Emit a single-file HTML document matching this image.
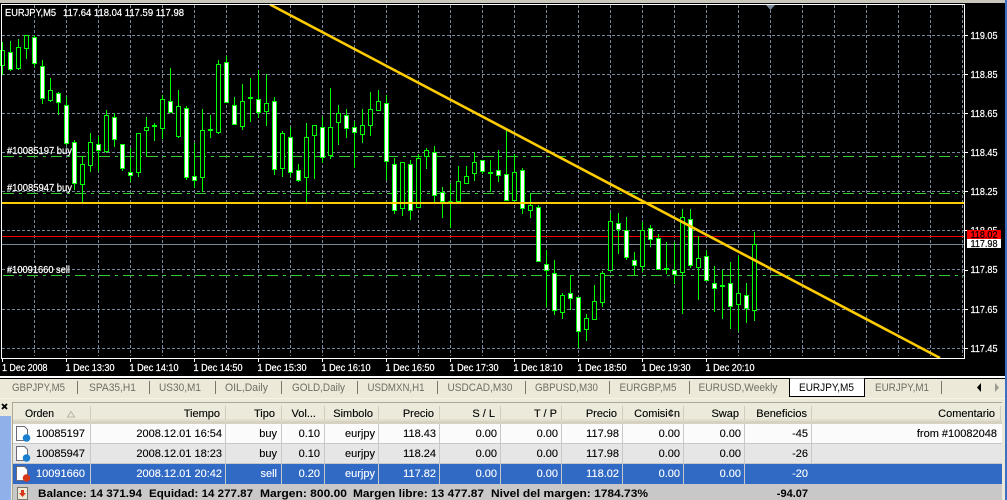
<!DOCTYPE html>
<html><head><meta charset="utf-8"><style>
html,body{margin:0;padding:0;background:#ece9d8;width:1007px;height:500px;overflow:hidden}
svg{display:block}
text{font-family:"Liberation Sans",sans-serif;font-size:11px;fill:#000;white-space:pre}
.c text{font-size:10.5px;fill:#fff;stroke:#fff;stroke-width:.22px}
.t text{fill:#6f6f64}
.h text,.r text{text-anchor:end;stroke:currentColor;stroke-width:.12px}
.h text,.r text{color:#000}
.w text{fill:#fff;color:#fff}
.b text{font-weight:bold}
</style></head><body>
<svg width="1007" height="500" viewBox="0 0 1007 500" xmlns="http://www.w3.org/2000/svg">
<rect width="1007" height="500" fill="#ece9d8"/>
<rect width="1007" height="3" fill="#c9c6bc"/>
<rect y="3" width="1005" height="373" fill="#000"/>
<rect y="376" width="1005" height="2" fill="#fff"/>
<rect y="378" width="1005" height="1" fill="#000"/>
<rect x="1005" y="0" width="2" height="500" fill="#3a6fc4"/>

<!-- grid -->
<path shape-rendering="crispEdges" fill="none" stroke="#778899" stroke-dasharray="3 2" d="M2 35.5H964M2 74.5H964M2 113.5H964M2 152.5H964M2 191.5H964M2 230.5H964M2 269.5H964M2 309.5H964M2 348.5H964
M34.5 5V356M66.5 5V356M98.5 5V356M130.5 5V356M162.5 5V356M194.5 5V356M226.5 5V356M258.5 5V356M290.5 5V356M322.5 5V356M354.5 5V356M386.5 5V356M418.5 5V356M450.5 5V356M482.5 5V356M514.5 5V356M546.5 5V356M578.5 5V356M610.5 5V356M642.5 5V356M674.5 5V356M706.5 5V356M738.5 5V356M770.5 5V356M802.5 5V356M834.5 5V356M866.5 5V356M898.5 5V356M930.5 5V356M962.5 5V356"/>
<path d="M766 5h9l-4.500 5z" fill="#778899"/>
<!-- order lines -->
<path shape-rendering="crispEdges" fill="none" stroke="#32cd32" stroke-dasharray="11 5 3 5" d="M3 156.500H964M3 193.500H964M3 275.500H964"/>
<path shape-rendering="crispEdges" fill="none" stroke="#778899" d="M2 244.500H964"/>
<path shape-rendering="crispEdges" fill="none" stroke="#f00" d="M2 236.500H964"/>

<!-- candles -->
<path shape-rendering="crispEdges" fill="none" stroke="#0f0" d="M2.500 42V75M10.500 41V71M18.500 39V70M26.500 35V59M34.500 35V67M42.500 60V104M50.500 78V102M58.500 92V115M66.500 97V145M74.500 140V190M82.500 156V203M90.500 133V172M98.500 136V171M106.500 110V153M114.500 113V147M122.500 144V171M130.500 148V182M138.500 133V177M146.500 117V157M154.500 123V141M162.500 95V139M170.500 68V113M178.500 90V138M186.500 106V180M194.500 143V188M202.500 109V192M210.500 115V138M218.500 60V134M226.500 56V103M234.500 97V125M242.500 84V130M250.500 78V122M258.500 70V118M266.500 74V126M274.500 97V175M282.500 131V177M290.500 127V177M298.500 164V182M306.500 123V203M314.500 125V179M322.500 117V163M330.500 88V159M338.500 105V145M346.500 109V138M354.500 121V168M362.500 109V143M370.500 92V136M378.500 90V111M386.500 95V180M394.500 158V214M402.500 162V216M410.500 160V220M418.500 154V208M426.500 148V169M434.500 146V203M442.500 187V218M450.500 183V228M458.500 166V202M466.500 166V184M474.500 152V181M482.500 160V174M490.500 160V192M498.500 150V182M506.500 130V201M514.500 154V201M522.500 168V214M530.500 193V218M538.500 205V262M546.500 250V307M554.500 260V315M562.500 293V319M570.500 275V310M578.500 297V348M586.500 314V341M594.500 285V320M602.500 271V307M610.500 213V271M618.500 213V254M626.500 217V260M634.500 252V275M642.500 222V272M650.500 225V247M658.500 234V270M666.500 242V274M674.500 242V284M682.500 209V314M690.500 209V268M698.500 236V300M706.500 250V281M714.500 266V312M722.500 270V319M730.500 262V329M738.500 256V331M746.500 283V323M754.500 232V321"/>
<path shape-rendering="crispEdges" fill="#fff" stroke="#0f0" d="M8.500 52.500h4v17h-4zM32.500 37.500h4v26h-4zM40.500 66.500h4v32h-4zM56.500 93.500h4v9h-4zM64.500 105.500h4v38h-4zM72.500 142.500h4v41h-4zM96.500 144.500h4v6h-4zM112.500 117.500h4v22h-4zM120.500 144.500h4v24h-4zM128.500 172.500h4v3h-4zM152.500 125.500h4v1h-4zM168.500 101.500h4v11h-4zM184.500 108.500h4v69h-4zM192.500 176.500h4v4h-4zM208.500 129.500h4v1h-4zM224.500 62.500h4v40h-4zM232.500 105.500h4v19h-4zM248.500 97.500h4v1h-4zM256.500 99.500h4v13h-4zM272.500 101.500h4v68h-4zM288.500 137.500h4v35h-4zM296.500 170.500h4v10h-4zM320.500 127.500h4v30h-4zM344.500 115.500h4v13h-4zM352.500 127.500h4v5h-4zM384.500 103.500h4v58h-4zM392.500 164.500h4v46h-4zM408.500 164.500h4v46h-4zM432.500 152.500h4v43h-4zM440.500 192.500h4v9h-4zM480.500 160.500h4v11h-4zM496.500 170.500h4v5h-4zM504.500 174.500h4v26h-4zM520.500 170.500h4v38h-4zM536.500 207.500h4v54h-4zM544.500 264.500h4v6h-4zM552.500 273.500h4v37h-4zM568.500 293.500h4v5h-4zM576.500 297.500h4v34h-4zM616.500 223.500h4v6h-4zM624.500 230.500h4v27h-4zM632.500 260.500h4v5h-4zM648.500 228.500h4v11h-4zM656.500 238.500h4v31h-4zM672.500 270.500h4v4h-4zM688.500 219.500h4v46h-4zM704.500 256.500h4v24h-4zM712.500 283.500h4v5h-4zM728.500 283.500h4v23h-4zM744.500 295.500h4v13h-4z"/>
<path shape-rendering="crispEdges" fill="#000" stroke="#0f0" d="M.5 50.500h4v15h-4zM16.500 47.500h4v21h-4zM24.500 35.500h4v13h-4zM48.500 90.500h4v10h-4zM80.500 164.500h4v20h-4zM88.500 142.500h4v23h-4zM104.500 115.500h4v36h-4zM136.500 133.500h4v39h-4zM144.500 127.500h4v3h-4zM160.500 99.500h4v29h-4zM176.500 106.500h4v30h-4zM200.500 130.500h4v47h-4zM216.500 64.500h4v68h-4zM240.500 101.500h4v25h-4zM264.500 103.500h4v8h-4zM280.500 133.500h4v35h-4zM304.500 137.500h4v40h-4zM312.500 125.500h4v10h-4zM328.500 127.500h4v28h-4zM336.500 113.500h4v9h-4zM360.500 125.500h4v9h-4zM368.500 109.500h4v16h-4zM376.500 101.500h4v9h-4zM400.500 162.500h4v46h-4zM416.500 158.500h4v49h-4zM424.500 150.500h4v6h-4zM448.500 201.500h4M456.500 181.500h4v20h-4zM464.500 176.500h4v7h-4zM472.500 162.500h4v11h-4zM488.500 172.500h4v1h-4zM512.500 172.500h4v28h-4zM528.500 205.500h4v5h-4zM560.500 295.500h4v17h-4zM584.500 318.500h4v11h-4zM592.500 301.500h4v18h-4zM600.500 273.500h4v29h-4zM608.500 221.500h4v49h-4zM640.500 230.500h4v36h-4zM664.500 268.500h4v1h-4zM680.500 217.500h4v55h-4zM696.500 258.500h4v9h-4zM720.500 285.500h4v1h-4zM736.500 293.500h4v11h-4zM752.500 244.500h4v66h-4z"/>

<!-- yellow objects -->
<rect x="2" y="202" width="962" height="2" fill="#ffcc00"/>
<path d="M270 4.500L940 358" stroke="#ffcc00" stroke-width="2.600" fill="none"/>

<!-- frame -->
<path shape-rendering="crispEdges" fill="none" stroke="#fff" d="M1.500 4.500H964.500V358.500H1.500z"/>
<path shape-rendering="crispEdges" fill="none" stroke="#fff" d="M965 35.500h3M965 74.500h3M965 113.500h3M965 152.500h3M965 191.500h3M965 230.500h3M965 270.500h3M965 309.500h3M965 348.500h3M2.500 359v3M66.500 359v3M130.500 359v3M194.500 359v3M258.500 359v3M322.500 359v3M386.500 359v3M450.500 359v3M514.500 359v3M578.500 359v3M642.500 359v3M706.500 359v3"/>

<g class="c">
<text x="5" y="16" textLength="51" lengthAdjust="spacingAndGlyphs">EURJPY,M5</text>
<text x="63" y="16" textLength="121" lengthAdjust="spacingAndGlyphs">117.64 118.04 117.59 117.98</text>
<text x="7" y="154" textLength="65" lengthAdjust="spacingAndGlyphs">#10085197 buy</text>
<text x="7" y="191" textLength="65" lengthAdjust="spacingAndGlyphs">#10085947 buy</text>
<text x="7" y="273" textLength="63" lengthAdjust="spacingAndGlyphs">#10091660 sell</text>
<text x="970.500" y="39" textLength="27" lengthAdjust="spacingAndGlyphs">119.05</text>
<text x="970.500" y="78" textLength="27" lengthAdjust="spacingAndGlyphs">118.85</text>
<text x="970.500" y="117" textLength="27" lengthAdjust="spacingAndGlyphs">118.65</text>
<text x="970.500" y="156" textLength="27" lengthAdjust="spacingAndGlyphs">118.45</text>
<text x="970.500" y="195" textLength="27" lengthAdjust="spacingAndGlyphs">118.25</text>
<text x="970.500" y="234" textLength="27" lengthAdjust="spacingAndGlyphs">118.05</text>
<text x="970.500" y="273" textLength="27" lengthAdjust="spacingAndGlyphs">117.85</text>
<text x="970.500" y="313" textLength="27" lengthAdjust="spacingAndGlyphs">117.65</text>
<text x="970.500" y="352" textLength="27" lengthAdjust="spacingAndGlyphs">117.45</text>
<text x="2" y="371" textLength="45.500" lengthAdjust="spacingAndGlyphs">1 Dec 2008</text>
<text x="65.500" y="371" textLength="49" lengthAdjust="spacingAndGlyphs">1 Dec 13:30</text>
<text x="129.500" y="371" textLength="49" lengthAdjust="spacingAndGlyphs">1 Dec 14:10</text>
<text x="193.500" y="371" textLength="49" lengthAdjust="spacingAndGlyphs">1 Dec 14:50</text>
<text x="257.500" y="371" textLength="49" lengthAdjust="spacingAndGlyphs">1 Dec 15:30</text>
<text x="321.500" y="371" textLength="49" lengthAdjust="spacingAndGlyphs">1 Dec 16:10</text>
<text x="385.500" y="371" textLength="49" lengthAdjust="spacingAndGlyphs">1 Dec 16:50</text>
<text x="449.500" y="371" textLength="49" lengthAdjust="spacingAndGlyphs">1 Dec 17:30</text>
<text x="513.500" y="371" textLength="49" lengthAdjust="spacingAndGlyphs">1 Dec 18:10</text>
<text x="577.500" y="371" textLength="49" lengthAdjust="spacingAndGlyphs">1 Dec 18:50</text>
<text x="641.500" y="371" textLength="49" lengthAdjust="spacingAndGlyphs">1 Dec 19:30</text>
<text x="705.500" y="371" textLength="49" lengthAdjust="spacingAndGlyphs">1 Dec 20:10</text>
</g>
<rect x="967" y="230" width="34" height="9" fill="#f00"/>
<rect x="967" y="239" width="34" height="9" fill="#fff"/>
<g class="c"><text x="970.500" y="238" textLength="27" lengthAdjust="spacingAndGlyphs" style="fill:#000;stroke:#000">118.02</text>
<text x="970.500" y="247" textLength="27" lengthAdjust="spacingAndGlyphs" style="fill:#000;stroke:#000">117.98</text></g>

<!-- tabs -->
<g class="t">
<text x="12" y="391" textLength="53" lengthAdjust="spacingAndGlyphs">GBPJPY,M5</text>
<text x="89" y="391" textLength="47" lengthAdjust="spacingAndGlyphs">SPA35,H1</text>
<text x="159" y="391" textLength="42" lengthAdjust="spacingAndGlyphs">US30,M1</text>
<text x="225" y="391" textLength="43" lengthAdjust="spacingAndGlyphs">OIL,Daily</text>
<text x="292" y="391" textLength="53" lengthAdjust="spacingAndGlyphs">GOLD,Daily</text>
<text x="367.500" y="391" textLength="57" lengthAdjust="spacingAndGlyphs">USDMXN,H1</text>
<text x="447.500" y="391" textLength="65" lengthAdjust="spacingAndGlyphs">USDCAD,M30</text>
<text x="535" y="391" textLength="63" lengthAdjust="spacingAndGlyphs">GBPUSD,M30</text>
<text x="619.500" y="391" textLength="57" lengthAdjust="spacingAndGlyphs">EURGBP,M5</text>
<text x="698.500" y="391" textLength="79" lengthAdjust="spacingAndGlyphs">EURUSD,Weekly</text>
<text x="875" y="391" textLength="54" lengthAdjust="spacingAndGlyphs">EURJPY,M1</text>
</g>
<path shape-rendering="crispEdges" stroke="#77776c" fill="none" d="M77.500 381v13M149.500 381v13M215.500 381v13M281.500 381v13M357.500 381v13M437.500 381v13M525.500 381v13M609.500 381v13M689.500 381v13M941.500 381v13"/>
<path shape-rendering="crispEdges" d="M789.500 378.500V396.500H864.500V378.500" fill="#fff" stroke="#000"/>
<text x="799" y="391" textLength="55" lengthAdjust="spacingAndGlyphs">EURJPY,M5</text>
<path d="M981 383v9l-4-4.500z" fill="#000"/>
<path d="M995 383v9l4-4.500z" fill="#9a9a90"/>
<rect y="398" width="1005" height="1" fill="#f7f5ea"/>

<!-- left strip -->
<path d="M2 404l5 5M7 404l-5 5" stroke="#000" stroke-width="1.800"/>
<rect y="416" width="11" height="84" fill="#8fb0e8"/>

<!-- table -->
<rect x="12" y="402" width="990" height="98" fill="#fff"/>
<rect x="12" y="402" width="990" height="20" fill="#ebeadb"/>
<rect x="12" y="419" width="990" height="2" fill="#e2dfcf"/>
<rect x="12" y="421" width="990" height="3" fill="#d6d2c2"/>
<rect x="12" y="424" width="990" height="19" fill="#fbfbfb"/>
<rect x="12" y="444" width="990" height="19" fill="#e6e6e6"/>
<rect x="12" y="464" width="990" height="20" fill="#316ac5"/>
<rect x="12" y="484" width="990" height="16" fill="#c8c8c8"/>
<path shape-rendering="crispEdges" stroke="#aca899" fill="none" d="M12.500 402V500M12 402.500H1002"/>
<path shape-rendering="crispEdges" stroke="#c8c8c8" fill="none" d="M13 443.500H1002M13 463.500H1002"/>
<path shape-rendering="crispEdges" stroke="#cfcdbd" fill="none" d="M90.500 406v14M225.500 406v14M281.500 406v14M324.500 406v14M378.500 406v14M439.500 406v14M500.500 406v14M561.500 406v14M622.500 406v14M683.500 406v14M744.500 406v14M811.500 406v14M1000.500 406v14"/>
<path shape-rendering="crispEdges" stroke="#c8c8c8" fill="none" d="M90.500 424v60M225.500 424v60M281.500 424v60M324.500 424v60M378.500 424v60M439.500 424v60M500.500 424v60M561.500 424v60M622.500 424v60M683.500 424v60M744.500 424v60M811.500 424v40"/>

<g class="h">
<text x="54" y="417" textLength="29" lengthAdjust="spacingAndGlyphs">Orden</text>
<text x="220" y="417">Tiempo</text><text x="275" y="417">Tipo</text><text x="316" y="417">Vol...</text>
<text x="373" y="417">Simbolo</text><text x="434" y="417">Precio</text><text x="495" y="417">S / L</text>
<text x="557" y="417">T / P</text><text x="617" y="417">Precio</text><text x="680" y="417">Comisi¢n</text>
<text x="739" y="417">Swap</text><text x="807" y="417">Beneficios</text><text x="995" y="417">Comentario</text>
</g>
<path d="M71 411.500l3.500 5.500h-7z" fill="none" stroke="#b8b5a6"/>

<g class="r">
<text x="85" y="437">10085197</text><text x="222" y="437">2008.12.01 16:54</text><text x="277" y="437">buy</text><text x="320" y="437">0.10</text><text x="375" y="437">eurjpy</text><text x="436" y="437">118.43</text><text x="497" y="437">0.00</text><text x="558" y="437">0.00</text><text x="619" y="437">117.98</text><text x="680" y="437">0.00</text><text x="741" y="437">0.00</text><text x="808" y="437">-45</text><text x="997" y="437">from #10082048</text>
<text x="85" y="457">10085947</text><text x="222" y="457">2008.12.01 18:23</text><text x="277" y="457">buy</text><text x="320" y="457">0.10</text><text x="375" y="457">eurjpy</text><text x="436" y="457">118.24</text><text x="497" y="457">0.00</text><text x="558" y="457">0.00</text><text x="619" y="457">117.98</text><text x="680" y="457">0.00</text><text x="741" y="457">0.00</text><text x="808" y="457">-26</text>
</g>
<g class="r w">
<text x="85" y="477">10091660</text><text x="222" y="477">2008.12.01 20:42</text><text x="277" y="477">sell</text><text x="320" y="477">0.20</text><text x="375" y="477">eurjpy</text><text x="436" y="477">117.82</text><text x="497" y="477">0.00</text><text x="558" y="477">0.00</text><text x="619" y="477">118.02</text><text x="680" y="477">0.00</text><text x="741" y="477">0.00</text><text x="808" y="477">-20</text>
</g>
<g class="b">
<text x="38" y="497" textLength="104" lengthAdjust="spacingAndGlyphs">Balance: 14 371.94</text>
<text x="149" y="497" textLength="104" lengthAdjust="spacingAndGlyphs">Equidad: 14 277.87</text>
<text x="260" y="497" textLength="87" lengthAdjust="spacingAndGlyphs">Margen: 800.00</text>
<text x="353" y="497" textLength="131" lengthAdjust="spacingAndGlyphs">Margen libre: 13 477.87</text>
<text x="491" y="497" textLength="157" lengthAdjust="spacingAndGlyphs">Nivel del margen: 1784.73%</text>
<text x="808" y="497" style="text-anchor:end">-94.07</text>
</g>

<!-- row icons -->
<g fill="#fff" stroke="#6b6b78">
<path d="M16.500 426.500h8l3 3v11h-11z"/><path d="M16.500 446.500h8l3 3v11h-11z"/><path d="M16.500 466.500h8l3 3v11h-11z"/>
</g>
<circle cx="26.500" cy="438" r="3.800" fill="#1b7fcf"/>
<circle cx="26.500" cy="458" r="3.800" fill="#1b7fcf"/>
<circle cx="26.500" cy="478" r="3.800" fill="#d8381a"/>
<rect x="17.500" y="487.500" width="10" height="12" fill="#ece9d8" stroke="#77776c"/>
<path d="M21 490h3v3h2l-3.500 4-3.500-4h2z" fill="#d8381a"/>
</svg>
</body></html>
